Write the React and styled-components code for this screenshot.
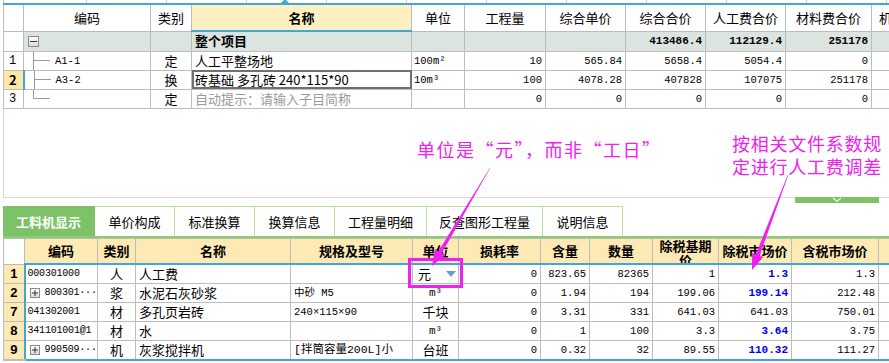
import React from 'react';
import styled, { createGlobalStyle } from 'styled-components';

const Global = createGlobalStyle`
  html, body { margin: 0; padding: 0; background: #fff; }
  body { font-family: "Noto Sans CJK SC", sans-serif; }
`;

const MONO = `"Liberation Mono", "Noto Sans CJK SC", monospace`;
const CJK = `"Noto Sans CJK SC", "Liberation Sans", sans-serif`;

const Root = styled.div`
  position: relative;
  width: 889px;
  height: 363px;
  overflow: hidden;
  background: #fff;
  box-sizing: border-box;
  padding-left: 3px;
  display: flex;
  flex-direction: column;
  font-family: ${CJK};
  font-size: 12px;
  color: #000;
`;

const TopStrip = styled.div`
  position: relative;
  height: 3px;
  flex: none;
  border-left: 1px solid #c8c8c8;
  background: repeating-linear-gradient(to right, transparent 0 79px, #d0d0d0 79px 80px);
  background-position: 3px 0;
`;

const Notch = styled.div`
  position: absolute;
  left: 277px;
  top: -1px;
  width: 0;
  height: 0;
  border-left: 4px solid transparent;
  border-right: 4px solid transparent;
  border-bottom: 4px solid #43a6d6;
`;

const TopPanel = styled.div`
  height: 194px;
  flex: none;
  box-sizing: border-box;
  border-top: 2px solid #43a6d6;
  display: flex;
  flex-direction: column;
  overflow: hidden;
`;

const Blank = styled.div`
  flex: 1;
  border-left: 1px solid #d4d4d4;
`;

const Grid = styled.table`
  border-collapse: collapse;
  table-layout: fixed;
  width: ${(p) => p.$w}px;
  flex: none;
`;

const TopHead = styled.th`
  height: 25px;
  padding: 0;
  font-weight: ${(p) => (p.$bold ? 700 : 400)};
  font-size: 13px;
  white-space: nowrap;
  overflow: hidden;
  background: ${(p) => (p.$hl ? '#fff0c4' : '#fff')};
  border: 1px solid #bcbcbc;
  border-top: none;
  border-bottom: ${(p) => (p.$hl ? '2px solid #43a6d6' : '1px solid #bcbcbc')};
`;

const Row = styled.tr`
  height: ${(p) => p.$h || 19}px;
`;

const Cell = styled.td`
  padding: 0 ${(p) => (p.$pad !== undefined ? p.$pad : 3)}px;
  border: 1px solid #bdbdbd;
  white-space: nowrap;
  overflow: hidden;
  line-height: 16px;
  text-align: ${(p) => p.$align || 'left'};
  background: ${(p) => p.$bg || 'transparent'};
  font-weight: ${(p) => (p.$bold ? 700 : 400)};
  color: ${(p) => p.$color || '#000'};
  font-family: ${(p) => (p.$mono ? MONO : CJK)};
  font-size: ${(p) => p.$size || 12}px;
`;

const EditCell = styled(Cell)`
  outline: 2px solid #707070;
  outline-offset: -2px;
`;

const SelNum = styled(Cell)`
  background: #fde7a6;
  border-right: 2px solid #43a6d6;
`;

const Flex = styled.div`
  display: flex;
  align-items: center;
  height: 18px;
`;

const TreeBox = styled.span`
  box-sizing: border-box;
  width: ${(p) => p.$s || 11}px;
  height: ${(p) => p.$s || 11}px;
  margin-left: ${(p) => p.$ml || 4}px;
  margin-right: ${(p) => p.$mr || 0}px;
  border: 1px solid #8a8a8a;
  background: linear-gradient(#ffffff, #dcdcdc);
  display: flex;
  align-items: center;
  justify-content: center;
  flex: none;
`;

const Code = styled.span`
  letter-spacing: -0.2px;
`;

const Tree = ({ last }) => (
  <svg width="28" height="19" viewBox="0 0 28 19" style={{ flex: 'none', display: 'block' }}>
    <line x1="9.5" y1="0" x2="9.5" y2={last ? 9.5 : 19} stroke="#9a9a9a" strokeWidth="1" />
    <line x1="9.5" y1="9.5" x2="26" y2="9.5" stroke="#9a9a9a" strokeWidth="1" />
  </svg>
);

const Minus = () => (
  <TreeBox>
    <svg width="7" height="7" viewBox="0 0 7 7"><line x1="0" y1="3.5" x2="7" y2="3.5" stroke="#333" /></svg>
  </TreeBox>
);

const Plus = () => (
  <TreeBox $s={10} $ml={4} $mr={5}>
    <svg width="6" height="6" viewBox="0 0 6 6">
      <line x1="0" y1="3" x2="6" y2="3" stroke="#333" />
      <line x1="3" y1="0" x2="3" y2="6" stroke="#333" />
    </svg>
  </TreeBox>
);

const Divider = styled.div`
  height: 1px;
  flex: none;
  background: #dadada;
  display: flex;
  justify-content: flex-end;
  overflow: visible;
  margin-bottom: 8px;
`;

const Handle = styled.div`
  width: 84px;
  height: 6px;
  margin-right: 10px;
  background: #7ec167;
  display: flex;
  justify-content: center;
  flex: none;
`;

const TabBar = styled.div`
  display: flex;
  height: 30px;
  flex: none;
  border-bottom: 2px solid #8ccb72;
`;

const Tab = styled.div`
  width: ${(p) => p.$w}px;
  box-sizing: border-box;
  display: flex;
  align-items: center;
  justify-content: center;
  font-size: 13px;
  border: 1px solid #b5e2a0;
  border-left: none;
  border-bottom: none;
  background: ${(p) => (p.$active ? '#7dc267' : '#fff')};
  color: ${(p) => (p.$active ? '#fff' : '#000')};
  font-weight: ${(p) => (p.$active ? 700 : 400)};
  border-color: ${(p) => (p.$active ? '#7dc267' : '#b5e2a0')};
`;

const BotHead = styled.th`
  height: 24px;
  padding: 0;
  background: ${(p) => (p.$plain ? '#fff' : '#fde9b3')};
  border: 1px solid #bcbcbc;
  border-bottom: ${(p) => (p.$plain ? '1px solid #bcbcbc' : '2px solid #43a6d6')};
  font-size: 13px;
  font-weight: 700;
`;

const HeadBox = styled.div`
  height: 24px;
  overflow: hidden;
  display: flex;
  justify-content: center;
  align-items: ${(p) => (p.$wrap ? 'flex-start' : 'center')};
  white-space: ${(p) => (p.$wrap ? 'normal' : 'nowrap')};
  line-height: ${(p) => (p.$wrap ? '14px' : '16px')};
  padding: 0 2px;
  text-align: center;
`;

const NumCell = styled(Cell)`
  background: #fde9b3;
  font-weight: 700;
  font-size: 13px;
  text-align: center;
  font-family: "Liberation Sans", sans-serif;
  border-bottom: ${(p) => (p.$last ? '2px solid #bdbdbd' : '1px solid #bdbdbd')};
`;

const BCell = styled(Cell)`
  border-top: ${(p) => (p.$first ? '2px solid #43a6d6' : '1px solid #bdbdbd')};
  border-bottom: ${(p) => (p.$last ? '2px solid #43a6d6' : '1px solid #bdbdbd')};
  border-left: ${(p) => (p.$edge ? '2px solid #43a6d6' : '1px solid #bdbdbd')};
`;

const Drop = styled.span`
  width: 0;
  height: 0;
  margin-left: 15px;
  border-left: 5px solid transparent;
  border-right: 5px solid transparent;
  border-top: 6px solid #6b9bd1;
`;

const Callout = styled.div`
  position: absolute;
  left: ${(p) => p.$x}px;
  top: ${(p) => p.$y}px;
  color: #f020f0;
  font-family: ${CJK};
  font-size: 18px;
  line-height: 23px;
  letter-spacing: ${(p) => p.$ls || 0}px;
  white-space: nowrap;
`;

const Mark = styled.div`
  position: absolute;
  left: 408px;
  top: 258px;
  width: 55px;
  height: 30px;
  box-sizing: border-box;
  border: 3px solid #f020f0;
`;

const Overlay = styled.svg`
  position: absolute;
  left: 0;
  top: 0;
  pointer-events: none;
`;

const topCols = [20, 127, 41, 220, 53, 81, 80, 80, 80, 86, 80];
const botCols = [21, 73, 38, 155, 122, 46, 82, 49, 63, 66, 73, 87, 80];

const topHeads = ['', '编码', '类别', '名称', '单位', '工程量', '综合单价', '综合合价', '人工费合价', '材料费合价', '机械费合价'];

const topRows = [
  { n: '1', code: 'A1-1', t: '定', name: '人工平整场地', unit: '100m²', v: ['10', '565.84', '5658.4', '5054.4', '0'] },
  { n: '2', sel: true, code: 'A3-2', t: '换', name: '砖基础 多孔砖 240*115*90', unit: '10m³', v: ['100', '4078.28', '407828', '107075', '251178'] },
  { n: '3', last: true, code: '', t: '定', name: '自动提示：请输入子目简称', gray: true, unit: '', v: ['0', '0', '0', '0', '0'] },
];

const botHeads = ['', '编码', '类别', '名称', '规格及型号', '单位', '损耗率', '含量', '数量', '除税基期价', '除税市场价', '含税市场价', '税率'];

const botRows = [
  { n: '1', code: '000301000', t: '人', name: '人工费', spec: '', unit: '元', drop: true, v: ['0', '823.65', '82365', '1'], m: '1.3', blue: true, tax: '1.3' },
  { n: '2', plus: true, code: '800301···', t: '浆', name: '水泥石灰砂浆', spec: '中砂 M5', unit: 'm³', v: ['0', '1.94', '194', '199.06'], m: '199.14', blue: true, tax: '212.48' },
  { n: '7', code: '041302001', t: '材', name: '多孔页岩砖', spec: '240×115×90', unit: '千块', v: ['0', '3.31', '331', '641.03'], m: '641.03', tax: '750.01' },
  { n: '8', code: '341101001@1', t: '材', name: '水', spec: '', unit: 'm³', v: ['0', '1', '100', '3.3'], m: '3.64', blue: true, tax: '3.75' },
  { n: '9', plus: true, code: '990509···', t: '机', name: '灰浆搅拌机', spec: '[拌筒容量200L]小', unit: '台班', v: ['0', '0.32', '32', '89.55'], m: '110.32', blue: true, tax: '111.27' },
];

const tabs = [
  { label: '工料机显示', w: 92, active: true },
  { label: '单价构成', w: 80 },
  { label: '标准换算', w: 80 },
  { label: '换算信息', w: 80 },
  { label: '工程量明细', w: 92 },
  { label: '反查图形工程量', w: 116 },
  { label: '说明信息', w: 80 },
];

const sum = (a) => a.reduce((s, x) => s + x, 0);

export default function App() {
  return (
    <Root>
      <Global />
      <TopStrip>
        <Notch />
      </TopStrip>
      <TopPanel>
        <Grid $w={sum(topCols)}>
          <colgroup>
            {topCols.map((w, i) => (
              <col key={i} style={{ width: w }} />
            ))}
          </colgroup>
          <thead>
            <tr>
              {topHeads.map((h, i) => (
                <TopHead key={i} $hl={i === 3} $bold={i === 3}>
                  {h}
                </TopHead>
              ))}
            </tr>
          </thead>
          <tbody>
            <Row $h={20}>
              <Cell />
              <Cell $bg="#dce4e0" $pad={0}>
                <Flex><Minus /></Flex>
              </Cell>
              <Cell $bg="#dce4e0" />
              <Cell $bg="#dce4e0" $bold $size={13}>整个项目</Cell>
              <Cell $bg="#dce4e0" />
              <Cell $bg="#dce4e0" />
              <Cell $bg="#dce4e0" />
              <Cell $bg="#dce4e0" $mono $bold $size={11} $align="right">413486.4</Cell>
              <Cell $bg="#dce4e0" $mono $bold $size={11} $align="right">112129.4</Cell>
              <Cell $bg="#dce4e0" $mono $bold $size={11} $align="right">251178</Cell>
              <Cell $bg="#dce4e0" />
            </Row>
            {topRows.map((r) => {
              const NameCell = r.sel ? EditCell : Cell;
              return (
                <Row key={r.n}>
                  {r.sel ? (
                    <SelNum $bold $pad={5} $size={13}>{r.n}</SelNum>
                  ) : (
                    <Cell $pad={5} $size={12} $mono>{r.n}</Cell>
                  )}
                  <Cell $pad={0} $mono $size={10.5}>
                    <Flex>
                      <Tree last={r.last} />
                      <span style={{ marginLeft: 3 }}>{r.code}</span>
                    </Flex>
                  </Cell>
                  <Cell $align="center" $size={13}>{r.t}</Cell>
                  <NameCell $color={r.gray ? '#9a9a9a' : '#000'} $size={13}>{r.name}</NameCell>
                  <Cell $mono $size={10.5} $pad={2}>{r.unit}</Cell>
                  {r.v.map((x, i) => (
                    <Cell key={i} $mono $size={10.5} $align="right">{x}</Cell>
                  ))}
                  <Cell />
                </Row>
              );
            })}
          </tbody>
        </Grid>
        <Blank />
      </TopPanel>
      <Divider>
        <Handle>
          <svg width="12" height="6" viewBox="0 0 12 6">
            <polyline points="2,1 6,4.5 10,1" fill="none" stroke="#e6f3de" strokeWidth="1.2" />
          </svg>
        </Handle>
      </Divider>
      <TabBar>
        {tabs.map((t) => (
          <Tab key={t.label} $w={t.w} $active={t.active}>
            {t.label}
          </Tab>
        ))}
      </TabBar>
      <Grid $w={sum(botCols)}>
        <colgroup>
          {botCols.map((w, i) => (
            <col key={i} style={{ width: w }} />
          ))}
        </colgroup>
        <thead>
          <tr>
            {botHeads.map((h, i) => (
              <BotHead key={i} $plain={i === 0}>
                <HeadBox $wrap={i === 9}>{h}</HeadBox>
              </BotHead>
            ))}
          </tr>
        </thead>
        <tbody>
          {botRows.map((r, ri) => {
            const first = ri === 0;
            const last = ri === botRows.length - 1;
            const p = { $first: first, $last: last };
            return (
              <Row key={r.n}>
                <NumCell $last={last}>{r.n}</NumCell>
                <BCell {...p} $edge $pad={r.plus ? 0 : 2} $mono $size={10}>
                  {r.plus ? (
                    <Flex><Plus /><Code>{r.code}</Code></Flex>
                  ) : (
                    <Code>{r.code}</Code>
                  )}
                </BCell>
                <BCell {...p} $align="center" $size={13}>{r.t}</BCell>
                <BCell {...p} $size={13}>{r.name}</BCell>
                <BCell {...p} $mono $size={r.spec.startsWith('[') ? 11.5 : 10.5}>{r.spec}</BCell>
                <BCell {...p} $align={r.drop ? 'left' : 'center'} $size={r.unit.startsWith('m') ? 11 : 13} $mono={r.unit.startsWith('m')}>
                  {r.drop ? (
                    <Flex style={{ paddingLeft: 2 }}>
                      {r.unit}
                      <Drop />
                    </Flex>
                  ) : (
                    r.unit
                  )}
                </BCell>
                {r.v.map((x, i) => (
                  <BCell key={i} {...p} $mono $size={10.5} $align="right">{x}</BCell>
                ))}
                <BCell {...p} $mono $size={r.blue ? 11 : 10.5} $align="right" $bold={r.blue} $color={r.blue ? '#0000f0' : '#000'}>
                  {r.m}
                </BCell>
                <BCell {...p} $mono $size={10.5} $align="right">{r.tax}</BCell>
                <BCell {...p} />
              </Row>
            );
          })}
        </tbody>
      </Grid>

      <Callout $x={417} $y={138} $ls={1.5}>单位是“元”，而非“工日”</Callout>
      <Callout $x={732} $y={132} $ls={0.75}>
        按相关文件系数规
        <br />
        定进行人工费调差
      </Callout>
      <Mark />
      <Overlay width="889" height="363" viewBox="0 0 889 363">
        <polygon
          fill="#f020f0"
          points="490.2,168.1 441.8,253.2 445.3,255.3 432,266 434.9,249.1 438.4,251.2 489.8,167.9"
        />
        <polygon
          fill="#f020f0"
          points="788.3,175.1 759.6,255.7 763.3,257.1 752,270 752.1,252.9 755.8,254.3 787.7,174.9"
        />
      </Overlay>
    </Root>
  );
}
